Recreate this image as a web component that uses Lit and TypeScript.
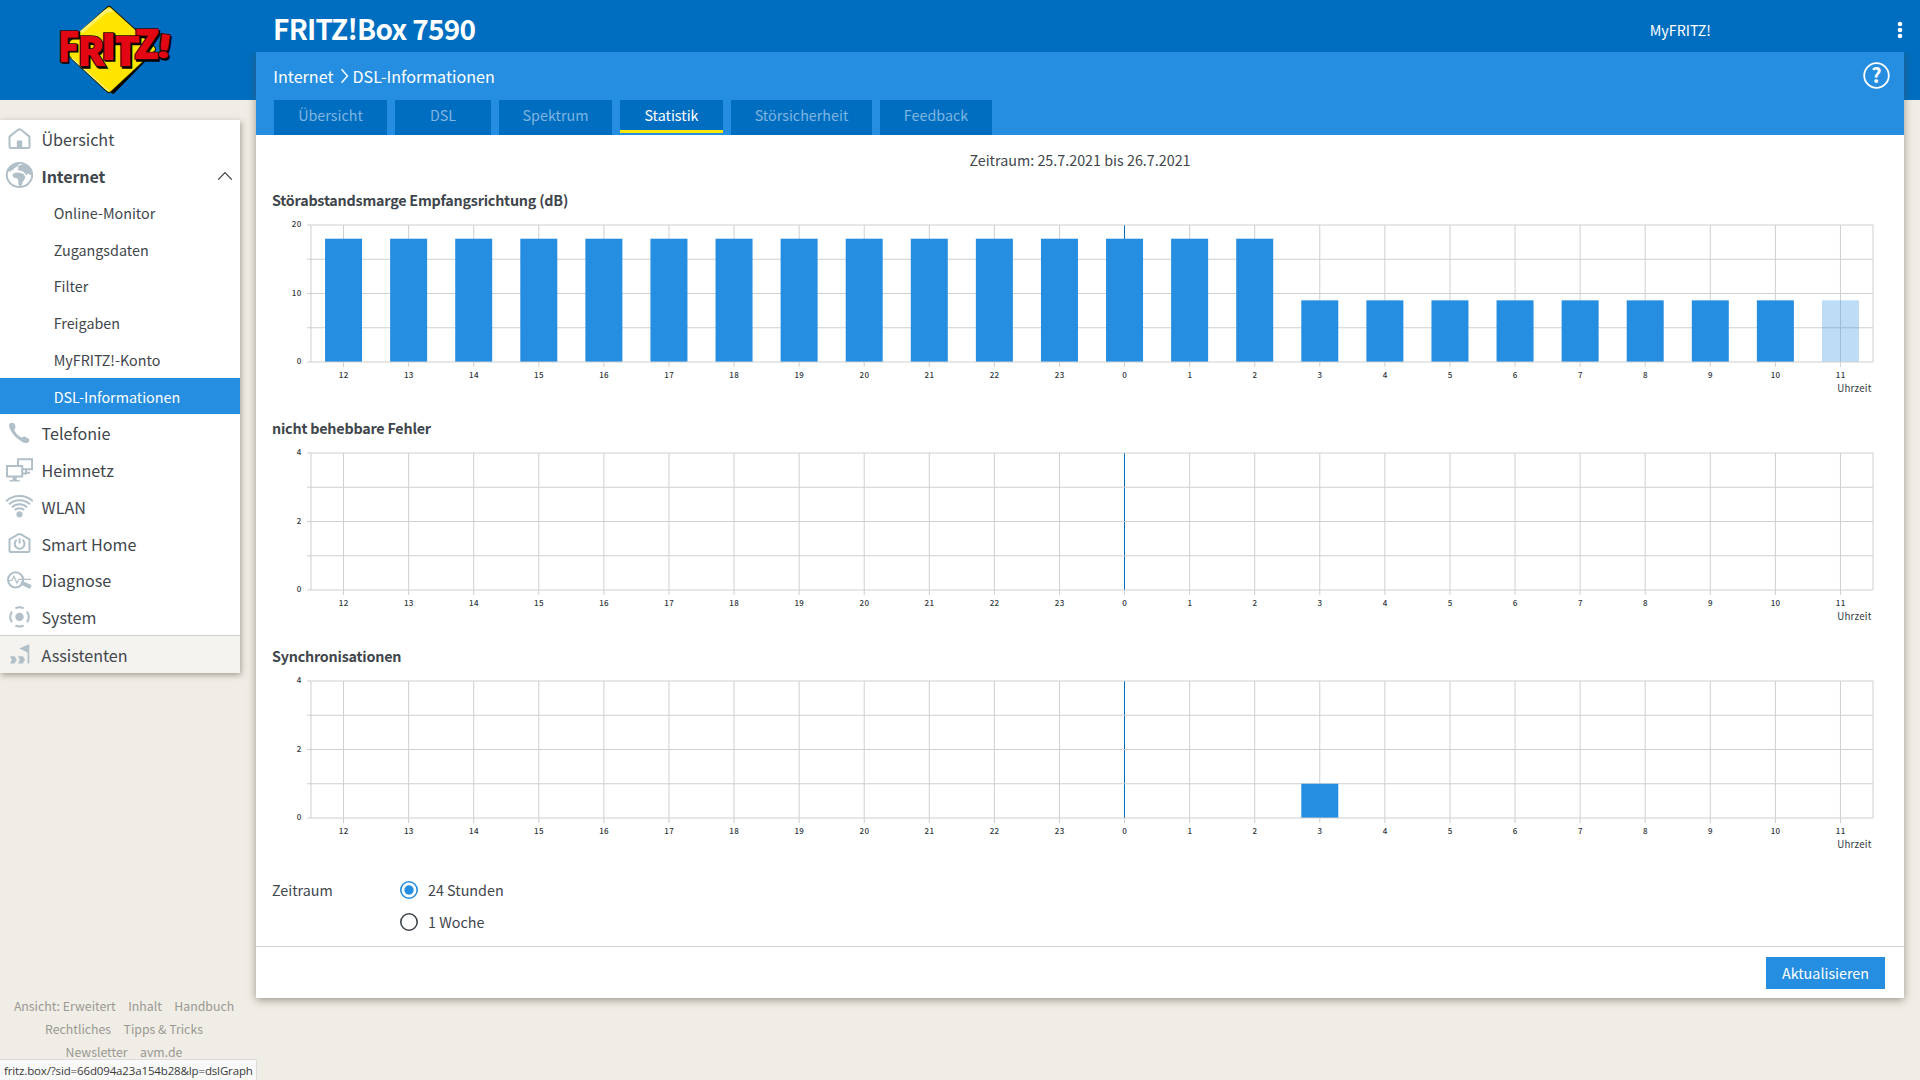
import { LitElement, html, svg, css } from "lit";
import { customElement, property, state } from "lit/decorators.js";
import { classMap } from "lit/directives/class-map.js";

const HOURS = [12, 13, 14, 15, 16, 17, 18, 19, 20, 21, 22, 23, 0, 1, 2, 3, 4, 5, 6, 7, 8, 9, 10, 11];

const ICONS: Record<string, unknown> = {
  home: svg`<path class="l" d="M4.500 11.6 12.700 5Q14.500 3.6 16.300 5L24.500 11.6V21.8Q24.500 23 23.300 23H5.700Q4.500 23 4.500 21.8Z"/><path class="f" d="M11.8 15.4h5.4v8h-5.4z"/>`,
  globe: svg`<ellipse class="l" cx="14.5" cy="13" rx="12.7" ry="12"/><path class="f" d="M7 3.6C9 1.5 12 1 15 1.2L13 3.5 11.5 5 9 6.2 8.4 8 6 8.3 5.5 10 3 9Q4 6 7 3.6Z"/><path class="f" d="M14 3.6 19 2 24 5.6 27 11 26 13.2 22.5 11.5 21.8 13.5 18 9.6 14.5 8.6 12.5 8 13.6 5.8 12.5 5Z"/><path class="f" d="M8.3 11.6 11 10.4 15 10.8 18.6 12 20.4 15.2 19.5 17.5 17.6 20 16.8 23 14.6 24.4 13.4 22 13.2 18 12 16.2 9 15.8 7.4 13.8Z"/>`,
  phone: svg`<path class="f" d="M4.8 4.6C6.8 3.3 9 3.4 9.9 5.4L10.5 8.2C10.4 9.6 8.9 9.9 9.5 11.4 10.8 14.2 13.3 16.7 16.2 18.3 17.5 19 18.2 17.3 19.6 17.6L23.4 19.4C25.2 20.8 24.2 23.2 22 24 19.6 24.6 16.4 22.6 13 20 9 16.6 5.6 12.4 4.4 8.4 4 6.8 4 5.2 4.8 4.6Z"/>`,
  network: svg`<path class="s" d="M13 9V3.3H27.1V13.3H18M21 14v3.4h-3M21 16.8h4"/><path class="s" d="M2 10H17.2V20.4H2Z"/><path class="f" d="M7.6 20.5h4v3.4h3v1.6H4.6v-1.6h3z"/>`,
  wifi: svg`<circle class="f" cx="14.5" cy="22.3" r="3.1"/><path class="l" d="M1.2 9.2C8 2.2 21 2.2 27.8 9.2M4 12.4C9.4 6.8 19.6 6.8 25 12.4M6.9 15.4C11 11.2 18 11.2 22.1 15.4M9.8 18C12.2 15.6 16.8 15.6 19.2 18"/>`,
  smart: svg`<path class="l" d="M4.500 10.4 13.100 5.4Q14.500 4.6 15.900 5.4L24.500 10.4V22Q24.500 23 23.500 23H5.500Q4.500 23 4.500 22Z"/><path class="l" d="M11.7 10.9A4.9 4.9 0 1 0 17.5 10.9M14.6 9.2v5.4"/>`,
  diagnose: svg`<circle class="l" cx="10.6" cy="13.8" r="7.6"/><path class="t" d="M4 14.8 7 14.2 9 10.4 12 17 13.8 13.4H26"/><path class="k" d="M17.6 17.2 24.4 20.4"/>`,
  system: svg`<circle class="f" cx="14.5" cy="14.9" r="4.2"/><path class="l" d="M10.4 6.3Q14.5 4.3 18.6 6.3M10.4 23.5Q14.5 25.500 18.6 23.5M7 9.500Q3.400 14.9 7 20.300M22 9.500Q25.600 14.9 22 20.300"/>`,
  assist: svg`<path class="f" d="M5 16.3h4.6l2.2 3.5-2.2 3.6H5l1.8-3.6zM13 16.3h4.8l2.2 3.5-2.2 3.6H13l1.8-3.6zM22.6 4.4h1.7v19h-1.7zM22.6 4.8V12.6L14.4 8.6Z"/>`,
};

interface NavItem {
  label: string;
  icon: string;
  open?: boolean;
  high?: boolean;
}

@customElement("nav-icon")
class NavIcon extends LitElement {
  @property() name = "home";
  static styles = css`
    :host { display: block; width: 28px; height: 28px; }
    svg { display: block; }
    .f { fill: #b0bfc8; }
    .l { fill: none; stroke: #b0bfc8; stroke-width: 2; stroke-linejoin: round; }
    .s { fill: none; stroke: #b0bfc8; stroke-width: 2; }
    .t { fill: none; stroke: #b0bfc8; stroke-width: 1.2; }
    .k { fill: none; stroke: #b0bfc8; stroke-width: 4; stroke-linecap: round; }
  `;
  render() {
    return html`<svg width="28" height="28" viewBox="0 0 28 28">${ICONS[this.name]}</svg>`;
  }
}

@customElement("hour-chart")
class HourChart extends LitElement {
  @property() heading = "";
  @property({ type: Number }) max = 4;
  @property({ attribute: false }) values: number[] = [];

  static styles = css`
    :host { display: block; height: 228px; }
    h2 { margin: 0; height: 30px; line-height: 28px; font-size: 14.33px; font-weight: 700; letter-spacing: -0.22px; }
    svg { display: block; }
    .grid { stroke: #cfcfcf; stroke-width: 1; }
    .midnight { fill: #006ec0; shape-rendering: crispEdges; }
    .bar { fill: #268ee0; }
    .pending { opacity: 0.3; }
    text { fill: #30373d; font-size: 8px; font-weight: 500; letter-spacing: 0.3px; }
    .x { text-anchor: middle; }
    .y { text-anchor: end; }
    .unit { text-anchor: end; font-size: 9.7px; font-weight: 400; letter-spacing: 0.2px; }
  `;

  render() {
    const left = 39, right = 1601, top = 9, bottom = 146;
    const step = (right - left) / 24;
    const cx = (i: number) => left + step * (i + 0.5);
    const rows = [0, 1, 2, 3].map((i) => top + ((bottom - top) / 4) * i);
    return html`
      <h2>${this.heading}</h2>
      <svg width="1616" height="198" viewBox="0 0 1616 198">
        <line class="grid" x1=${left} x2=${left} y1=${top} y2=${bottom}></line>
        <line class="grid" x1=${right} x2=${right} y1=${top} y2=${bottom}></line>
        ${HOURS.map((h, i) => svg`
          <line class="grid" x1=${cx(i)} x2=${cx(i)} y1=${h === 0 ? bottom : top} y2="151"/>
          ${h === 0 ? svg`<rect class="midnight" x="852" width="1" y=${top} height=${bottom - top}/>` : null}
          <text class="x" x=${cx(i) + 0.2} y="161.6">${h}</text>`)}
        ${rows.map((y) => svg`<line class="grid" x1="35" x2=${right} y1=${y} y2=${y}/>`)}
        ${this.values.map((v, i) => {
          const h = ((bottom - top) * v) / this.max;
          return v
            ? svg`<rect class=${i === 23 ? "bar pending" : "bar"} x=${cx(i) - 18.5} y=${bottom - h} width="37" height=${h}/>`
            : null;
        })}
        <line class="grid" x1="35" x2=${right} y1=${bottom} y2=${bottom}></line>
        <text class="y" x="29.5" y="11">${this.max}</text>
        <text class="y" x="29.5" y="79.6">${this.max / 2}</text>
        <text class="y" x="29.5" y="148">0</text>
        <text class="unit" x="1599.5" y="176">Uhrzeit</text>
      </svg>`;
  }
}

@customElement("app-root")
class AppRoot extends LitElement {
  @state() range = "24 Stunden";

  static styles = css`
    :host {
      display: grid;
      grid-template-columns: 256px 1664px;
      width: 1920px;
      height: 1080px;
      overflow: hidden;
      position: relative;
      box-sizing: border-box;
      background: linear-gradient(#006ec0 100px, #f0ede6 100px);
      color: #3f464c;
      font-family: "Noto Sans CJK SC", "Noto Sans", sans-serif;
      font-size: 14.33px;
    }
    .side { display: flex; flex-direction: column; height: 1080px; }
    .brand { height: 120px; flex: none; }
    .brand svg { display: block; }
    .glyph { font-family: Lato, sans-serif; font-weight: 900; stroke-linejoin: miter; }
    .ghost { fill: #000; stroke: #000; stroke-width: 3.4; }
    .edge { fill: #2a0a06; stroke: #2a0a06; stroke-width: 3.6; }
    .red { fill: #e30613; stroke: #e30613; stroke-width: 1.8; }
    nav { width: 240px; height: 553px; background: #fff; box-shadow: 1px 2px 6px rgba(80, 76, 60, 0.5); box-sizing: border-box; padding-top: 1px; }
    .row { display: flex; align-items: center; height: 36.7px; padding-left: 5px; box-sizing: border-box; font-size: 16.12px; }
    .row nav-icon { margin-right: 8.5px; }
    .label { line-height: 24px; padding-top: 1.3px; white-space: nowrap; }
    .open .label { font-weight: 700; letter-spacing: -0.15px; padding-top: 0; }
    .high .label { padding-top: 0; }
    .open .chev { margin-left: auto; margin-right: 7.5px; }
    .row.sub { font-size: 14.33px; padding-left: 53.7px; }
    .row.current { background: #268ee0; color: #fff; height: 36px; margin-bottom: 0.7px; }
    .current .label { padding-top: 2px; }
    .row.assist { height: 38px; border-top: 1px solid #cfcfcf; background: #f5f3ef; }
    .assist .label { padding-top: 2px; }
    .links { margin-top: auto; padding-bottom: 16px; width: 248px; text-align: center; font-size: 12.3px; line-height: 23px; color: #999892; }
    .links div { display: flex; justify-content: center; gap: 12.5px; }
    .top { height: 52px; display: flex; align-items: center; color: #fff; padding-left: 17px; box-sizing: border-box; }
    h1 { margin: 0; font-size: 28px; line-height: 52px; font-weight: 700; letter-spacing: -0.7px; padding-top: 4px; }
    .my { margin-left: auto; margin-right: 184px; line-height: 24px; padding-top: 8px; }
    .dots { display: block; margin: 10px 15px 0 0; }
    .panel { width: 1648px; height: 946px; background: #fff; box-shadow: 0 2px 8px rgba(80, 76, 60, 0.55); display: flex; flex-direction: column; clip-path: inset(0 -16px -16px -16px); }
    .head { height: 83px; flex: none; background: #268ee0; color: #fff; display: flex; flex-direction: column; justify-content: space-between; }
    .crumbs { display: flex; align-items: center; height: 48px; padding: 0 14.5px 0 17.3px; font-size: 16.12px; line-height: 24px; }
    .crumbs .sep { margin: 0 4px 0 6px; }
    .help { margin-left: auto; margin-bottom: 2px; overflow: visible; }
    .q { font-weight: 700; font-size: 20px; text-anchor: middle; fill: #fff; }
    .tabs { display: flex; gap: 8px; padding-left: 18px; height: 35px; }
    .tab { height: 35px; line-height: 29px; background: #006ec0; color: #7fb5e1; text-align: center; box-sizing: border-box; }
    .tab.on { color: #fff; height: 33px; border-bottom: 3px solid #fde70a; }
    .w113 { width: 113px; } .w96 { width: 96px; } .w103 { width: 103px; } .w141 { width: 141px; } .w112 { width: 112px; }
    .body { padding: 0 16px; height: 811px; box-sizing: border-box; }
    .period { height: 51px; line-height: 49px; text-align: center; }
    .choose { display: flex; padding-top: 4px; }
    .choose .name { width: 128px; line-height: 32px; }
    .opt { display: flex; align-items: center; height: 32px; gap: 10px; line-height: 24px; cursor: pointer; }
    .foot { flex: none; border-top: 1px solid #d0d2d4; height: 52px; box-sizing: border-box; display: flex; justify-content: flex-end; align-items: center; padding: 1px 19px 0 0; }
    button { width: 119px; height: 32px; border: 0; padding: 0; background: #268ee0; color: #fff; font: inherit; line-height: 30px; }
    .status { position: absolute; left: 0; bottom: 0; width: 257px; height: 21px; box-sizing: border-box; background: #f9f9fa; border-top: 1px solid #dcdcdc; border-right: 1px solid #dcdcdc; padding-left: 4px; font: 11.5px/21px "Open Sans", sans-serif; letter-spacing: -0.14px; color: #3a3a3a; white-space: nowrap; }
  `;

  private glyph(ch: string, x: number, base: number, w: number, size: number, rot = 0) {
    const t = `rotate(${rot} ${x + w / 2} ${base - size * 0.36})`;
    const layer = (kind: string, d: number) => svg`
      <text class=${"glyph " + kind} x=${x + d} y=${base + d} font-size=${size} textLength=${w} lengthAdjust="spacingAndGlyphs" transform=${t}>${ch}</text>`;
    return svg`${layer("ghost", 1.6)}${layer("edge", 0)}${layer("red", 0)}`;
  }

  private row(item: NavItem) {
    return html`<div class=${classMap({ row: true, open: !!item.open, high: !!item.high })}>
      <nav-icon name=${item.icon}></nav-icon><span class="label">${item.label}</span>
      ${item.open ? html`<svg class="chev" width="16" height="10" viewBox="0 0 16 10"><path d="M1.2 8.6 8 1.6 14.8 8.6" fill="none" stroke="#3f464c" stroke-width="1.3"/></svg>` : null}
    </div>`;
  }

  private radio(label: string) {
    const on = this.range === label;
    return html`<div class="opt" @click=${() => (this.range = label)}>
      <svg width="18" height="18" viewBox="0 0 18 18">
        <circle cx="9" cy="9" r="8.2" fill="#fff" stroke=${on ? "#268ee0" : "#3f464c"} stroke-width="1.6"/>
        ${on ? svg`<circle cx="9" cy="9" r="4.7" fill="#268ee0"/>` : null}
      </svg><span>${label}</span></div>`;
  }

  render() {
    const margin = HOURS.map((_, i) => (i < 15 ? 18 : 9));
    const none = HOURS.map(() => 0);
    const syncs = HOURS.map((h) => (h === 3 ? 1 : 0));
    const tabs: [string, string][] = [["Übersicht", "w113"], ["DSL", "w96"], ["Spektrum", "w113"], ["Statistik", "w103"], ["Störsicherheit", "w141"], ["Feedback", "w112"]];
    return html`
      <div class="side">
        <div class="brand">
          <svg width="256" height="100" viewBox="0 0 256 100">
            <defs><linearGradient id="shine" x1="0" y1="0" x2="1" y2="1"><stop offset="0" stop-color="#fffbd0"/><stop offset="1" stop-color="#ffe500"/></linearGradient></defs>
            <path d="M109 10 153 50 113 91Z" fill="#000" stroke="#000" stroke-width="5" stroke-linejoin="round"/>
            <path d="M109 9.500 152.500 49 109 89.500 65.500 49Z" fill="#ffe500" stroke="#1d1a00" stroke-width="7" stroke-linejoin="round"/>
            <path d="M109 9.500 152.500 49 109 89.500 65.500 49Z" fill="#ffe500" stroke="#ffe500" stroke-width="5" stroke-linejoin="round"/>
            <path d="M79 32 104.500 10Q108.500 7 112.500 10L114 12 106 13 83 33Z" fill="url(#shine)"/>
            <path d="M72 58 106 89 109 91" fill="none" stroke="#fff27a" stroke-width="1.500"/>
            ${this.glyph("F", 59, 60.5, 19, 40)}
            ${this.glyph("Z", 135.5, 58, 22.5, 37)}
            ${this.glyph("R", 78.5, 65, 25, 38)}
            ${this.glyph("T", 112.5, 65, 26, 38)}
            ${this.glyph("I", 102, 58.5, 13, 35)}
            ${this.glyph("!", 158.5, 57, 11.5, 30, 7)}
          </svg>
        </div>
        <nav>
          ${this.row({ label: "Übersicht", icon: "home", high: true })}
          ${this.row({ label: "Internet", icon: "globe", open: true })}
          ${["Online-Monitor", "Zugangsdaten", "Filter", "Freigaben", "MyFRITZ!-Konto", "DSL-Informationen"].map(
            (l) => html`<div class=${classMap({ row: true, sub: true, current: l.startsWith("DSL"), high: l === "Filter" })}><span class="label">${l}</span></div>`
          )}
          ${this.row({ label: "Telefonie", icon: "phone" })}
          ${this.row({ label: "Heimnetz", icon: "network" })}
          ${this.row({ label: "WLAN", icon: "wifi" })}
          ${this.row({ label: "Smart Home", icon: "smart" })}
          ${this.row({ label: "Diagnose", icon: "diagnose", high: true })}
          ${this.row({ label: "System", icon: "system" })}
          <div class="row assist"><nav-icon name="assist"></nav-icon><span class="label">Assistenten</span></div>
        </nav>
        <div class="links">
          <div><span>Ansicht: Erweitert</span><span>Inhalt</span><span>Handbuch</span></div>
          <div><span>Rechtliches</span><span>Tipps &amp; Tricks</span></div>
          <div><span>Newsletter</span><span>avm.de</span></div>
        </div>
      </div>
      <div class="main">
        <div class="top">
          <h1>FRITZ!Box 7590</h1>
          <span class="my">MyFRITZ!</span>
          <svg class="dots" width="10" height="20" viewBox="0 0 10 20"><g fill="#fff"><circle cx="5" cy="3" r="2.300"/><circle cx="5" cy="9" r="2.300"/><circle cx="5" cy="15" r="2.300"/></g></svg>
        </div>
        <div class="panel">
          <div class="head">
            <div class="crumbs">
              <span>Internet</span>
              <svg class="sep" width="9" height="16" viewBox="0 0 9 16"><path d="M1.500 1.200 7.500 8 1.500 14.800" fill="none" stroke="#fff" stroke-width="1.400"/></svg>
              <span>DSL-Informationen</span>
              <svg class="help" width="27" height="27" viewBox="0 0 27 27"><circle cx="13.500" cy="13.500" r="12.300" fill="none" stroke="#fff" stroke-width="1.800"/><text class="q" x="13.500" y="20.700">?</text></svg>
            </div>
            <div class="tabs">
              ${tabs.map(([t, w]) => html`<div class=${classMap({ tab: true, [w]: true, on: t === "Statistik" })}>${t}</div>`)}
            </div>
          </div>
          <div class="body">
            <div class="period">Zeitraum: 25.7.2021 bis 26.7.2021</div>
            <hour-chart heading="Störabstandsmarge Empfangsrichtung (dB)" .max=${20} .values=${margin}></hour-chart>
            <hour-chart heading="nicht behebbare Fehler" .max=${4} .values=${none}></hour-chart>
            <hour-chart heading="Synchronisationen" .max=${4} .values=${syncs}></hour-chart>
            <div class="choose">
              <div class="name">Zeitraum</div>
              <div>${this.radio("24 Stunden")}${this.radio("1 Woche")}</div>
            </div>
          </div>
          <div class="foot"><button>Aktualisieren</button></div>
        </div>
      </div>
      <div class="status">fritz.box/?sid=66d094a23a154b28&amp;lp=dslGraph</div>`;
  }
}
